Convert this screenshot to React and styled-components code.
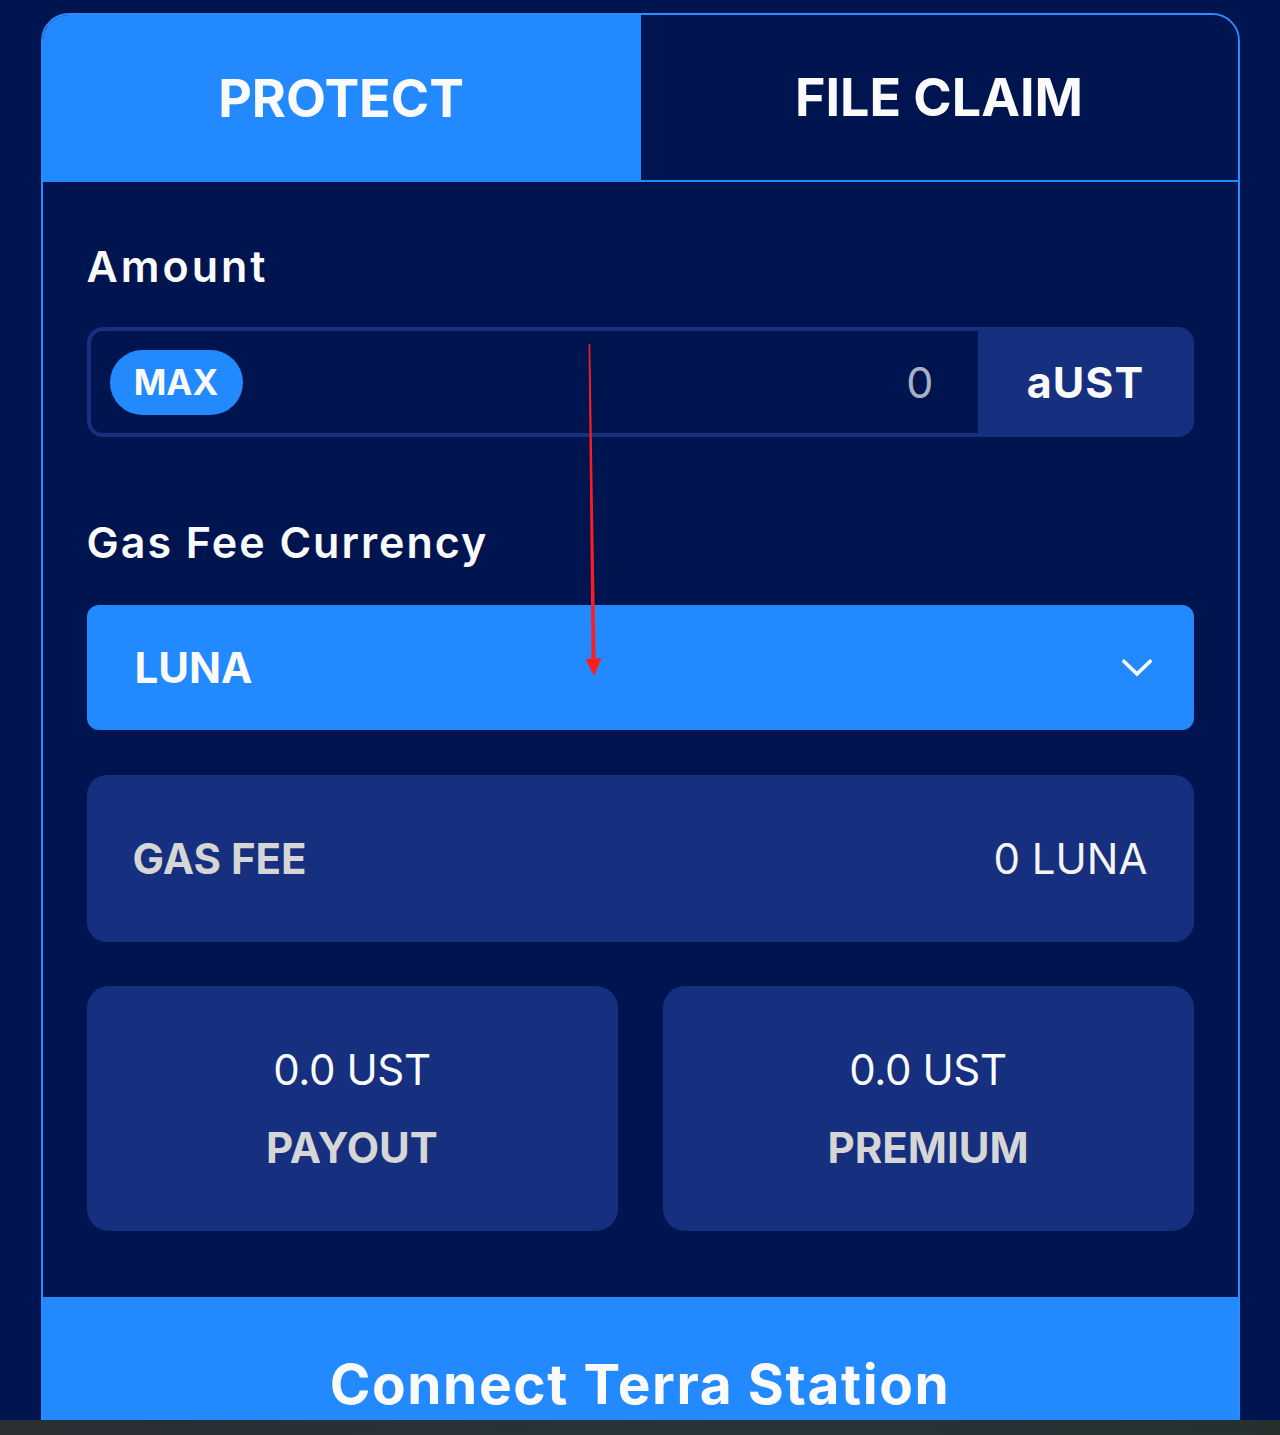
import React from 'react'
import styled, { createGlobalStyle } from 'styled-components'

const GlobalStyle = createGlobalStyle`
  html, body {
    margin: 0;
    padding: 0;
    background: #001550;
  }
  body {
    font-family: Inter, "Noto Sans", sans-serif;
    color: #fafafa;
  }
`

const Page = styled.div`
  position: relative;
  height: 1435px;
  display: flex;
  flex-direction: column;
  overflow: hidden;
  background: #001550;
`

const Main = styled.main`
  flex: 1;
  overflow: hidden;
  padding-top: 13px;
`

const Card = styled.section`
  width: 1199px;
  margin: 0 auto;
  box-sizing: border-box;
  border: 2px solid #2a8cff;
  border-radius: 28px 28px 0 0;
  overflow: hidden;
  background: #001550;
`

const Tabs = styled.div`
  display: flex;
  height: 167px;
`

const Tab = styled.button`
  flex: 1;
  border: none;
  margin: 0;
  padding: 0;
  font-family: inherit;
  font-size: 52px;
  font-weight: 700;
  color: #fafafa;
  background: ${p => (p.$active ? '#2289ff' : '#001550')};
  border-bottom: ${p => (p.$active ? 'none' : '2px solid #2289ff')};
  border-left: ${p => (p.$active ? 'none' : '1px solid #2289ff')};
  cursor: pointer;
`

const Body = styled.div`
  padding: 63px 44px 0;
  display: flex;
  flex-direction: column;
`

const Label = styled.h3`
  margin: 0;
  font-size: 43px;
  line-height: 43px;
  font-weight: 600;
  letter-spacing: ${p => p.$spacing || 2}px;
  color: #fafafa;
  margin-top: ${p => p.$top || 0}px;
`

const AmountRow = styled.div`
  margin-top: 39px;
  height: 110px;
  display: flex;
  background: #16307f;
  border-radius: 16px;
`

const InputWrap = styled.div`
  flex: 1;
  margin: 4px 0 4px 4px;
  display: flex;
  align-items: center;
  justify-content: space-between;
  padding: 0 44px 0 19px;
  background: #001550;
  border-radius: 12px 0 0 12px;
`

const MaxButton = styled.button`
  width: 133px;
  height: 65px;
  border: none;
  border-radius: 33px;
  background: #2289ff;
  color: #fafafa;
  font-family: inherit;
  font-size: 35px;
  font-weight: 700;
  padding: 0;
`

const AmountValue = styled.span`
  font-size: 43px;
  color: #a9afc6;
`

const Unit = styled.div`
  width: 216px;
  display: flex;
  align-items: center;
  justify-content: center;
  font-size: 43px;
  font-weight: 700;
  letter-spacing: 1px;
`

const Select = styled.div`
  margin-top: 41px;
  height: 125px;
  display: flex;
  align-items: center;
  justify-content: space-between;
  padding: 0 42px 0 48px;
  background: #2289ff;
  border-radius: 12px;
  font-size: 42px;
  font-weight: 700;
`

const FeeBox = styled.div`
  margin-top: 45px;
  height: 167px;
  display: flex;
  align-items: center;
  justify-content: space-between;
  padding: 0 46px;
  background: #16307f;
  border-radius: 20px;
  font-size: 42px;
`

const FeeName = styled.span`
  font-weight: 700;
  color: #d6d6d6;
`

const FeeValue = styled.span`
  color: #f4f4f4;
`

const Stats = styled.div`
  margin-top: 44px;
  display: grid;
  grid-template-columns: 1fr 1fr;
  gap: 45px;
`

const Stat = styled.div`
  height: 245px;
  display: flex;
  flex-direction: column;
  align-items: center;
  justify-content: center;
  gap: 34px;
  background: #16307f;
  border-radius: 22px;
`

const StatValue = styled.div`
  font-size: 42px;
  line-height: 44px;
  color: #fafafa;
  letter-spacing: -0.4px;
`

const StatName = styled.div`
  font-size: 42px;
  line-height: 43px;
  font-weight: 700;
  color: #d6d6d6;
`

const ConnectButton = styled.button`
  display: block;
  width: 100%;
  margin-top: 66px;
  padding: 60px 0 60px;
  border: none;
  background: #2289ff;
  color: #fafafa;
  font-family: inherit;
  font-size: 55px;
  line-height: 55px;
  font-weight: 700;
  letter-spacing: 1.6px;
`

const BottomBar = styled.div`
  height: 15px;
  flex-shrink: 0;
  background: linear-gradient(90deg, #2a2f33, #26343a 60%, #25302f);
`

const Annotation = styled.svg`
  position: absolute;
  top: 0;
  left: 0;
  pointer-events: none;
`

const Chevron = () => (
  <svg width="30" height="18" viewBox="0 0 30 18" fill="none">
    <path d="M2 2.5 L15 15 L28 2.5" stroke="#fff" strokeWidth="3.6" strokeLinecap="square" />
  </svg>
)

export default function App() {
  return (
    <>
      <GlobalStyle />
      <Page>
        <Main>
          <Card>
            <Tabs>
              <Tab $active>PROTECT</Tab>
              <Tab>FILE CLAIM</Tab>
            </Tabs>
            <Body>
              <Label $spacing={3}>Amount</Label>
              <AmountRow>
                <InputWrap>
                  <MaxButton>MAX</MaxButton>
                  <AmountValue>0</AmountValue>
                </InputWrap>
                <Unit>aUST</Unit>
              </AmountRow>

              <Label $top={84}>Gas Fee Currency</Label>
              <Select>
                <span>LUNA</span>
                <Chevron />
              </Select>

              <FeeBox>
                <FeeName>GAS FEE</FeeName>
                <FeeValue>0 LUNA</FeeValue>
              </FeeBox>

              <Stats>
                <Stat>
                  <StatValue>0.0 UST</StatValue>
                  <StatName>PAYOUT</StatName>
                </Stat>
                <Stat>
                  <StatValue>0.0 UST</StatValue>
                  <StatName>PREMIUM</StatName>
                </Stat>
              </Stats>
            </Body>
            <ConnectButton>Connect Terra Station</ConnectButton>
          </Card>
        </Main>
        <BottomBar />
        <Annotation width="1280" height="1435" viewBox="0 0 1280 1435">
          <polygon points="588.6,344 590.2,344 595.6,662 591.6,662" fill="#ff1c1c" />
          <polygon points="585.5,659 601.5,658 594,676" fill="#ff1c1c" />
        </Annotation>
      </Page>
    </>
  )
}
